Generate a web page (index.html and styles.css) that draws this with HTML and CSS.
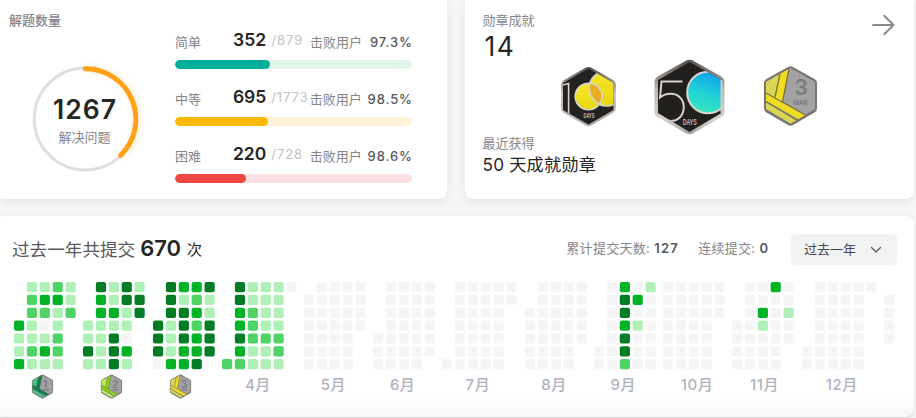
FILE: index.html
```html
<!DOCTYPE html>
<html lang="zh-CN">
<head>
<meta charset="utf-8">
<title>解题统计</title>
<link rel="stylesheet" href="styles.css">
</head>
<body>
<main class="page">
  <div class="top">
    <section class="card solved">
      <div class="summary">
        <h2 class="summary-title">解题数量</h2>
        <div class="ring">
          <svg class="ring-svg" width="126" height="126" viewBox="22 55.5 126 126">
            <circle cx="85.3" cy="118.5" r="51" fill="none" stroke="#dedede" stroke-width="3"/>
            <path class="ring-arc" d="M85.3 68.3A50.3 50.3 0 0 1 120.6 154.7" fill="none" stroke="#ffa116" stroke-width="5" stroke-linecap="round"/>
          </svg>
          <div class="ring-text">
            <div class="ring-num">1267</div>
            <div class="ring-label">解决问题</div>
          </div>
        </div>
      </div>
      <div class="levels">
        <div class="level easy">
          <div class="level-row"><span class="name">简单</span><span class="done">352</span><span class="total">/879</span><span class="beat">击败用户</span><span class="pct">97.3%</span></div>
          <div class="bar"><div class="fill" style="width:95px"></div></div>
        </div>
        <div class="level medium">
          <div class="level-row"><span class="name">中等</span><span class="done">695</span><span class="total">/1773</span><span class="beat">击败用户</span><span class="pct">98.5%</span></div>
          <div class="bar"><div class="fill" style="width:93px"></div></div>
        </div>
        <div class="level hard">
          <div class="level-row"><span class="name">困难</span><span class="done">220</span><span class="total">/728</span><span class="beat">击败用户</span><span class="pct">98.6%</span></div>
          <div class="bar"><div class="fill" style="width:71px"></div></div>
        </div>
      </div>
    </section>

    <section class="card medals">
      <div class="medals-head">
        <div>
          <div class="caption">勋章成就</div>
          <div class="count">14</div>
        </div>
        <svg class="arrow" width="24" height="24" viewBox="0 0 24 24" fill="none" stroke="#88888c" stroke-width="2" stroke-linecap="round" stroke-linejoin="round"><path d="M2 12H22.5M13.2 2.7L22.5 12L13.2 21.3"/></svg>
      </div>
      <div class="medal-row">
        <svg class="m100" width="57" height="61" viewBox="0 0 57 61">
          <defs>
            <linearGradient id="silver" x1="0" y1="0" x2="0" y2="1"><stop offset="0" stop-color="#55514f"/><stop offset=".45" stop-color="#c9c6c4"/><stop offset="1" stop-color="#aaa7a5"/></linearGradient>
            <linearGradient id="gold" x1="0" y1="0" x2="0" y2="1"><stop offset="0" stop-color="#f8e52a"/><stop offset="1" stop-color="#e7d810"/></linearGradient>
            <clipPath id="c100"><path d="M28.5 2.5L53.5 17V44L28.5 58.5L3 44V17Z"/></clipPath>
          </defs>
          <path d="M25 2Q28.5 0 32 2L53 14Q56 16 56 19V42Q56 45 53 47L32 59Q28.5 61 25 59L4 47Q1 45 1 42V19Q1 16 4 14Z" fill="url(#silver)"/>
          <path d="M28.5 2.5L53.5 17V44L28.5 58.5L3 44V17Z" fill="#242121"/>
          <g clip-path="url(#c100)" stroke="#d7d3ca" stroke-width="1.6">
            <circle cx="46.5" cy="22.5" r="17.5" fill="url(#gold)"/>
            <circle cx="28.5" cy="30.5" r="13.3" fill="url(#gold)"/>
            <path d="M29.8 17.3A17.5 17.5 0 0 0 39.8 38A13.3 13.3 0 0 0 29.8 17.3Z" fill="#e7ae20"/>
            <path d="M3 19L8.6 17.5V48" fill="none"/>
          </g>
          <text class="days" x="23.5" y="51.5" font-size="6.4" textLength="11" lengthAdjust="spacingAndGlyphs">DAYS</text>
        </svg>
        <svg class="m50" width="71" height="76" viewBox="0 0 71 76">
          <defs>
            <linearGradient id="pale" x1="0" y1="0" x2="0" y2="1"><stop offset="0" stop-color="#55504c"/><stop offset=".4" stop-color="#b9b5b0"/><stop offset=".8" stop-color="#d5d1cb"/><stop offset="1" stop-color="#a7a39f"/></linearGradient>
            <linearGradient id="aqua" x1=".65" y1="0" x2=".35" y2="1"><stop offset="0" stop-color="#0d9ff0"/><stop offset=".55" stop-color="#20d2d5"/><stop offset="1" stop-color="#38e9bd"/></linearGradient>
            <clipPath id="c50"><path d="M35.5 3L67.5 21V54L35.5 73L4 54V21Z"/></clipPath>
          </defs>
          <path d="M31.5 2Q35.5 -.5 39.5 2L66.5 17Q70.5 19.5 70.5 23V53Q70.5 56.5 66.5 58.5L39.5 74Q35.5 76.5 31.5 74L4.5 58.5Q.5 56.5 .5 53V23Q.5 19.5 4.5 17Z" fill="url(#pale)"/>
          <path d="M35.5 3L67.5 21V54L35.5 73L4 54V21Z" fill="#221f1f"/>
          <g clip-path="url(#c50)">
            <circle cx="54" cy="33.5" r="20.8" fill="url(#aqua)" stroke="#d6d6d0" stroke-width="2"/>
            <path d="M28.5 22.5H7.5L6 38.5C9 36 12.5 34.8 16.5 34.8C24.5 34.8 29.8 40.5 29.8 48C29.8 56.500 24 62 16.5 62C13 62 10.5 61 8 59" fill="none" stroke="#d7d3ce" stroke-width="2"/>
          </g>
          <path d="M67.5 21V54" stroke="#c7cccb" stroke-width="2"/>
          <text class="days" x="28.8" y="66" font-size="8.3" textLength="14" lengthAdjust="spacingAndGlyphs">DAYS</text>
        </svg>
        <svg class="mmar" width="55" height="62" viewBox="0 0 55 62">
          <defs>
            <symbol id="month-badge" viewBox="0 0 55 62">
              <path d="M25 2Q27.5 .5 30 2L51.5 14Q54 15.5 54 18V43Q54 46 51.5 47.5L30 60Q27.5 61.5 25 60L3.5 47.5Q1 46 1 43V18Q1 15.5 3.5 14Z" fill="#77756f"/>
              <path d="M27.5 3L52 17V44L27.5 58.5L3 44V17Z" fill="#a2a2a2"/>
              <path d="M3 17L17 9L12.5 33L3 28Z" fill="var(--b)"/>
              <path d="M17 9L26 4L19.5 37L12.5 33Z" fill="var(--a)"/>
              <path d="M3 28L42.5 50L35.5 54L3 36Z" fill="var(--a)"/>
              <path d="M3 37.5L33 55.5L27.5 58.5L3 44Z" fill="var(--b)"/>
              <path d="M17 9L12 32M26 4L19.5 37M3 28L42.5 50M3 36.5L34 55" fill="none" stroke="var(--c)" stroke-width="1.3"/>
            </symbol>
          </defs>
          <use href="#month-badge"/>
          <text class="digit" x="31.5" y="30" font-size="21">3</text>
          <text class="digit" x="30" y="39.5" font-size="6.5" textLength="14.5">MAR</text>
        </svg>
      </div>
      <div class="caption recent">最近获得</div>
      <div class="recent-name">50 天成就勋章</div>
    </section>
  </div>

  <section class="card activity">
    <header class="activity-head">
      <div class="year"><span>过去一年共提交</span><b>670</b><span class="unit">次</span></div>
      <div class="stats">
        <span class="stat days-total">累计提交天数: <b>127</b></span>
        <span class="stat streak">连续提交: <b>0</b></span>
        <button class="select"><span>过去一年</span><svg width="12" height="8" viewBox="0 0 12 8" fill="none" stroke="#5c5c60" stroke-width="1.3" stroke-linecap="round" stroke-linejoin="round"><path d="M1.5 1.5L6 6L10.5 1.5"/></svg></button>
      </div>
    </header>
    <div class="calendar" id="calendar"></div>
  </section>
</main>
<script src="calendar.js"></script>
</body>
</html>
```

FILE: styles.css
```css
* { box-sizing: border-box; }
body {
  margin: 0;
  background: #f5f6f8;
  color: #262626;
  font-family: Inter, "Noto Sans CJK SC", sans-serif;
  font-size: 13px;
}
.page { width: 916px; height: 418px; overflow: hidden; }
.top { display: flex; gap: 18px; height: 199px; margin-bottom: 17px; }
.card {
  background: #fff;
  box-shadow: 0 2px 8px rgba(0, 0, 0, .08);
}
.solved { display: flex; width: 447px; border-radius: 0 0 8px 3px; }
.summary { width: 175px; padding: 10px 0 0 9px; }
.summary-title {
  margin: 0;
  height: 20px;
  line-height: 20px;
  font-size: 13px;
  font-weight: 500;
  color: #858589;
}
.ring { display: grid; width: 126px; height: 126px; margin: 25.5px 0 0 13px; }
.ring-svg, .ring-text { grid-area: 1 / 1; }
.ring-arc { filter: drop-shadow(2px 0 3px rgba(255, 161, 22, .22)); }
.ring-text { padding-top: 37.5px; text-align: center; }
.ring-num { height: 33px; line-height: 33px; font-size: 26.5px; font-weight: 600; letter-spacing: 1px; }
.ring-label { height: 22px; line-height: 22px; color: #858589; padding-right: 1px; }

.levels { display: flex; flex-direction: column; gap: 18px; width: 237px; padding-top: 29px; }
.level { height: 39px; }
.level-row { display: flex; align-items: center; height: 22px; margin-bottom: 9px; white-space: nowrap; }
.name { width: 58px; color: #858589; padding-top: 2px; }
.done { width: 38.5px; margin-top: -1px; font-size: 17.5px; font-weight: 600; }
.total { width: 38.5px; margin-top: -1px; color: #c2c2c4; letter-spacing: .9px; }
.beat { width: 58px; color: #858589; padding-top: 3px; }
.pct { flex: 1; text-align: right; font-weight: 500; color: #58585c; padding-top: 4px; letter-spacing: .9px; margin-right: -.9px; }
.bar { height: 9px; border-radius: 5px; overflow: hidden; }
.fill { height: 9px; border-radius: 5px; }
.easy .bar { background: #e0f4e7; }
.easy .fill { background: #00af9b; }
.medium .bar { background: #fff2d9; }
.medium .fill { background: #ffb800; }
.hard .bar { background: #fde2e3; }
.hard .fill { background: #ef4743; }

.medals { width: 449px; padding-left: 17.5px; border-radius: 0 0 8px 8px; }
.medals-head { display: flex; justify-content: space-between; height: 59px; padding: 10px 19px 0 0; }
.caption { height: 20px; line-height: 20px; color: #858589; }
.count { height: 32px; line-height: 32px; padding-left: 2px; font-size: 26.5px; letter-spacing: 1.5px; }
.arrow { margin-top: 3px; }
.medal-row { display: flex; align-items: flex-start; height: 75px; }
.m100 { margin: 7px 0 0 77px; }
.m50 { margin-left: 37px; }
.mmar { margin: 6px 0 0 38px; }
.days { fill: #bdb9b1; font-family: "Liberation Sans", sans-serif; font-weight: 700; }
.digit { fill: #7b7b7b; font-family: Inter, sans-serif; font-weight: 600; }
.recent { height: 19px; line-height: 19px; }
.recent-name { height: 24px; line-height: 24px; font-size: 17.2px; letter-spacing: .2px; }

.activity {
  width: 914px;
  height: 201px;
  border-radius: 2px 8px 8px 0;
  background: linear-gradient(#fff 174px, #f7f7f7 201px);
  box-shadow: 0 1px 1px rgba(0, 0, 0, .12), 0 2px 8px rgba(0, 0, 0, .07);
}
.activity-head { display: flex; justify-content: space-between; align-items: center; height: 66px; padding: 0 17px 0 12px; }
.year { display: flex; align-items: center; margin-top: -2px; font-size: 17.6px; color: #58585c; }
.year b { margin: 0 6px 0 5px; font-size: 22px; font-weight: 600; color: #262626; }
.unit { font-size: 15px; color: #262626; }
.stats { display: flex; align-items: center; color: #858589; }
.stat { display: flex; align-items: baseline; gap: 4px; margin-top: -3px; letter-spacing: .3px; }
.stat b { font-weight: 600; color: #58585c; letter-spacing: 1px; }
.days-total { margin-right: 19px; }
.streak { margin-right: 22px; }
.days-total b { letter-spacing: 1.3px; }
.select {
  display: flex;
  align-items: center;
  justify-content: space-between;
  width: 106px;
  height: 31px;
  padding: 0 15px 2px 13px;
  border: 0;
  border-radius: 5px;
  background: #f1f2f4;
  color: #48484c;
  font: inherit;
}
.select svg { margin-top: 3px; }
.calendar { display: flex; gap: 4.88px; padding-left: 14px; }
.month { display: flex; flex-direction: column; align-items: center; flex: none; }
.month-label {
  width: 31px;
  height: 29px;
  line-height: 29px;
  font-size: 15px;
  letter-spacing: .5px;
  color: #b0b3be;
  white-space: nowrap;
  font-weight: 500;
}
.month-label.wide { width: 29px; }
.month-badge { width: 23px; height: 25px; margin: 4px 8px 0 0; }
.jan { --a: #14804f; --b: #3fc68c; --c: #2c5c45; }
.feb { --a: #8bd41c; --b: #c4ec58; --c: #5f7d2c; }
.mar, .mmar { --a: #f1dd20; --b: #dbd554; --c: #77733b; }
```

FILE: calendar.js
```js
// One string per week, one character per day: 0-4 is the activity level, "." is no day.
const FULL = "0000000";
const MONTHS = [
  { badge: "jan", digit: "1", weeks: ["...3113", "1221121", "1320131", "2311221", "112...."] },
  { badge: "feb", digit: "2", weeks: ["...1141", "4331111", "1131444", "4411031", "144...."] },
  { badge: "mar", digit: "3", weeks: ["...4440", "4441113", "3144433", "3232334", "411444."] },
  { label: "4月", weeks: ["......2", "4433432", "1122211", "1111211", "1111221", "0......"] },
  { label: "5月", weeks: [".000000", FULL, FULL, FULL, "0000..."] },
  { label: "6月", weeks: ["....000", FULL, FULL, FULL, "000000."] },
  { label: "7月", weeks: ["......0", FULL, FULL, FULL, FULL, "00....."] },
  { label: "8月", weeks: ["..00000", FULL, FULL, FULL, "00000.."] },
  { label: "9月", weeks: [".....00", FULL, "3443442", "0301000", "0000000"] },
  { label: "10月", weeks: [FULL, FULL, FULL, FULL, "000...."] },
  { label: "11月", weeks: ["...0000", FULL, "0031000", "3000000", "00100.."] },
  { label: "12月", weeks: [".....00", FULL, FULL, FULL, FULL, "0......"] },
  { weeks: [".0000.."] }
];
MONTHS[8].weeks[4] = "1000000";
const COLORS = ["#f5f5f5", "#aef0b5", "#4fd364", "#02b328", "#027c25"];
const PITCH = 12.88;
const CELL = 10.2;

function footer(month) {
  if (month.badge) {
    return `<svg class="month-badge ${month.badge}" viewBox="0 0 55 62"><use href="#month-badge"/><text class="digit" x="29" y="34" font-size="25">${month.digit}</text><path d="M30 39H44" stroke="#777" stroke-width="3"/></svg>`;
  }
  if (!month.label) return "";
  const size = month.label.length > 2 ? "month-label wide" : "month-label";
  return `<div class="${size}">${month.label}</div>`;
}

document.getElementById("calendar").innerHTML = MONTHS.map((month) => {
  const width = month.weeks.length * PITCH;
  const cells = month.weeks.map((week, x) => [...week].map((level, y) =>
    level === "." ? "" :
      `<rect x="${x * PITCH}" y="${y * 12.85}" width="${CELL}" height="${CELL}" rx="2" fill="${COLORS[level]}"/>`
  ).join("")).join("");
  return `<div class="month"><svg width="${width}" height="88" viewBox="0 0 ${width} 88">${cells}</svg>${footer(month)}</div>`;
}).join("");
```
